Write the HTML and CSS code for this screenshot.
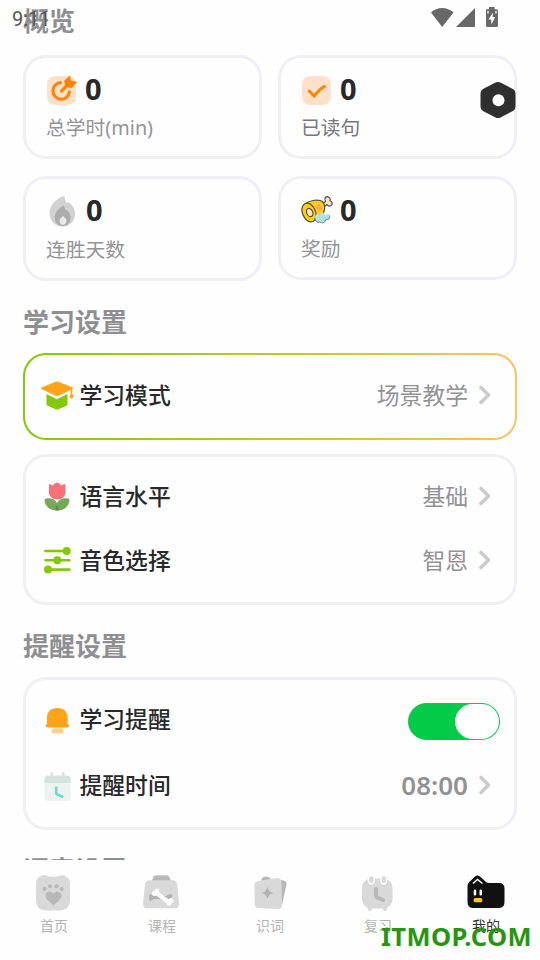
FILE: index.html
```html
<!DOCTYPE html>
<html lang="zh-CN">
<head>
<meta charset="utf-8">
<title>我的</title>
<link rel="stylesheet" href="styles.css">
</head>
<body>
<div class="app">
  <main class="content">
    <h2 class="section-title first">概览</h2>
    <section class="stats">
      <div class="stat">
        <div class="stat-top">
          <svg class="stat-icon" width="32" height="32" viewBox="0 0 32 32"><rect x="1" y="2" width="29" height="29" rx="8" fill="#ffe0c8"/><path d="M14.500 8.600A8.300 8.300 0 1 0 23.400 18" fill="none" stroke="#ff8200" stroke-width="3" stroke-linecap="round"/><path d="M15.500 17l7-7" stroke="#ff8200" stroke-width="3.200" stroke-linecap="round"/><path d="M18 7l5.600-5.500 1.600 5 6 1.500-5.400 6-6-1z" fill="#ff8200"/></svg>
          <b class="num">0</b>
        </div>
        <div class="stat-label">总学时(min)</div>
      </div>
      <div class="stat">
        <div class="stat-top">
          <svg class="stat-icon" width="32" height="32" viewBox="0 0 32 32"><rect x="1" y="2" width="29" height="29" rx="8" fill="#ffe0c8"/><path d="M8.300 17l5 5.200C16 18.500 18.500 15 23.400 12.500" fill="none" stroke="#ff8200" stroke-width="3" stroke-linecap="round" stroke-linejoin="round"/></svg>
          <b class="num">0</b>
        </div>
        <div class="stat-label dark">已读句</div>
      </div>
      <div class="stat tall">
        <div class="stat-top">
          <svg class="stat-icon" width="32" height="32" viewBox="0 0 32 32"><path d="M18 1C11 3 3 10 3.500 18.500 4 27 10 31.500 16.500 31.500S29 27 29 19c0-6-3.500-10-7-12-1 1-1.500 1-2 .5C18.800 6 19.500 3 18 1z" fill="#d2d2d2"/><path d="M18 10.500c-3 1-9.500 6-9.300 12.500.2 4.500 3.300 8 8 8s8-3.500 8-8-2.700-7-5-8.200c-.8-.6-1-2.300-1.700-4.300z" fill="#acacac"/><path d="M17 21c-2 1.500-3.500 3-3.500 5 0 2.300 1.500 3.700 3.500 3.700s3.500-1.500 3.500-3.700c0-2-1.500-3.500-3.500-5z" fill="#e8e8e8"/></svg>
          <b class="num shifted">0</b>
        </div>
        <div class="stat-label">连胜天数</div>
      </div>
      <div class="stat reward">
        <div class="stat-top">
          <svg class="stat-icon" width="32" height="32" viewBox="0 0 32 32"><g stroke="#4a4a4a" stroke-width="1.200" stroke-linejoin="round"><path d="M21 9l3.500-2.500c-2-3 .5-6 3.300-4.300 2 1 1.500 3 1 3.500 3.200 1 3 4.300.7 5.300-2 .5-3-.5-3.500-1.500L23 12z" fill="#fbe3cb"/><path d="M5 8.500C9 5 18 4 21.500 6.500c3 3 3 10-.5 13.500-3 3-6 5-9 6z" fill="#ffd000"/><ellipse cx="8" cy="17.500" rx="6.500" ry="9.800" transform="rotate(-23 8 17.500)" fill="#ffd000"/><ellipse cx="8.700" cy="17.500" rx="3" ry="4.300" transform="rotate(-22 8.700 17.500)" fill="#fbe3cb"/></g><path d="M15 11l3-2 2 2 1 2-2 3-2-1-2-1z" fill="#ff9c88"/><circle cx="18" cy="12.500" r="1" fill="#ffd000"/><path d="M14 21.500c1-3 3-3 4.500-2 1-3 5-2.500 5.500.5 2-1.500 5.500-.5 5 2 0 2.500-2.500 3.500-4.500 2.500 0 2.500-3 3.500-5 2-3 1.500-6-1-5.500-5z" fill="#b4dfe4"/><path d="M24.500 25c-.5 3-3.500 3.500-5.500 2-3 1-5-1-5-4M28.500 20.500c1 3-1.500 4.500-4 4" stroke="#5d7d81" fill="none"/></svg>
          <b class="num">0</b>
        </div>
        <div class="stat-label">奖励</div>
      </div>
    </section>

    <h2 class="section-title study">学习设置</h2>
    <section class="panel mode">
      <div class="row">
        <svg class="row-icon" width="34" height="34" viewBox="0 0 34 34"><path d="M6.500 15L17 20.300 27.500 15v10q0 1-1 1.700L19 30q-2 1-4 0l-7.500-3.300q-1-.7-1-1.700z" fill="#83c904"/><path d="M15 3q2-.8 4 0l13.500 5.500q1.500.8 0 1.600L19 16.500q-2 .8-4 0L1.500 10q-1.500-.8 0-1.500z" fill="#ffa319"/><path d="M31.500 10v8" stroke="#ffa319" stroke-width="1.600"/><circle cx="31.500" cy="17.500" r="1.900" fill="#ffa319"/></svg>
        <span class="name">学习模式</span><span class="value">场景教学</span>
        <svg class="chevron" width="12" height="20" viewBox="0 0 12 20"><path d="M2 2.500L9.500 10 2 17.500" /></svg>
      </div>
    </section>
    <section class="panel voice">
      <div class="row">
        <svg class="row-icon" width="34" height="34" viewBox="0 0 34 34"><path d="M9 5.500c2-.5 3 .5 3.600 1.500C13.500 5 15 4 17 3.500 19 4 20.500 5 21.400 7c.6-1 2-2 4-1.500V13c0 4-3.500 7.500-8.300 7.500S8.800 17 8.800 13z" fill="#fa7078"/><path d="M11 19.500c5 1 8 6 7.500 11.800C10 32.500 4.500 27 4.500 20.500 6 19 8 19 11 19.500z" fill="#76a85a"/><path d="M23 19.500c-5 1-8 6-7.500 11.800C24 32.500 29.500 27 29.500 20.500 28 19 26 19 23 19.500z" fill="#76a85a"/><path d="M17 26q2 2.500 1.500 5.200h-3Q15 28.500 17 26z" fill="#59943c"/></svg>
        <span class="name">语言水平</span><span class="value">基础</span>
        <svg class="chevron" width="12" height="20" viewBox="0 0 12 20"><path d="M2 2.500L9.500 10 2 17.500" /></svg>
      </div>
      <div class="row">
        <svg class="row-icon" width="34" height="34" viewBox="0 0 34 34"><path d="M5.400 8h23M5.400 17.300h24M5.400 26.600h24" stroke="#83c904" stroke-width="2.600" stroke-linecap="round"/><g fill="#83c904"><circle cx="26.700" cy="8" r="4"/><circle cx="17.300" cy="17.300" r="4"/><circle cx="8" cy="26.600" r="4"/></g></svg>
        <span class="name">音色选择</span><span class="value">智恩</span>
        <svg class="chevron" width="12" height="20" viewBox="0 0 12 20"><path d="M2 2.500L9.500 10 2 17.500" /></svg>
      </div>
    </section>

    <h2 class="section-title remind-title">提醒设置</h2>
    <section class="panel remind">
      <div class="row">
        <svg class="row-icon" width="34" height="34" viewBox="0 0 34 34"><path d="M7 16C7 9.500 11 6 17.300 6S27.700 9.500 27.700 16v5.500l1.300 2q.4 2-1.500 2h-20q-2 0-1.800-2L7 21.500z" fill="#ffa319"/><rect x="11.500" y="26.500" width="12" height="5" rx="2.500" fill="#ffcf8c"/></svg>
        <span class="name">学习提醒</span>
        <span class="switch"><span class="knob"></span></span>
      </div>
      <div class="row">
        <svg class="row-icon" width="34" height="34" viewBox="0 0 34 34"><path d="M4.300 14h26.400v15q0 4-4 4H8.300q-4 0-4-4z" fill="#edf2f0"/><path d="M4.300 15V11q0-3.500 4-3.500h18.400q4 0 4 3.500v4z" fill="#d6e4df"/><path d="M11.700 5.200v4M23.300 5.200v4" stroke="#d6e4df" stroke-width="2.600" stroke-linecap="round"/><path d="M16.200 18.500v6.500q0 1 1 1.500l6 2.500" fill="none" stroke="#68ddca" stroke-width="2.600"/></svg>
        <span class="name">提醒时间</span><span class="value time">08:00</span>
        <svg class="chevron" width="12" height="20" viewBox="0 0 12 20"><path d="M2 2.500L9.500 10 2 17.500" /></svg>
      </div>
    </section>
    <h2 class="section-title">语音设置</h2>
  </main>

  <nav class="tabs">
    <div class="tab">
      <svg width="40" height="38" viewBox="0 0 40 38"><path d="M10 1.200c3-.5 4 .8 6 1.300q4 .5 8 0c2-.5 4-1.800 7-1 4 1.500 6 4 6 8V26q0 10-10 10.500H13Q3 36.500 3 26V9.500C3 5 6 2 10 1.200z" fill="#d9d9d9"/><path d="M20.500 31.500l-6-5.500c-3-3-2.500-8 2-8.500q2.500 0 4 2 1.500-2 4-2c4.500.5 5 5.500 2 8.500z" fill="#b8b8b8"/><g fill="#b8b8b8"><circle cx="11.500" cy="15" r="2"/><circle cx="17" cy="12.200" r="2"/><circle cx="23.500" cy="12.200" r="2"/><circle cx="28.700" cy="15" r="2"/></g></svg>
      <span>首页</span>
    </div>
    <div class="tab">
      <svg width="40" height="38" viewBox="0 0 40 38"><path d="M11 7l1.300-4q.5-1.800 2.500-1.800h11q2 0 2.500 1.800L30 7z" fill="#b8b8b8"/><path d="M9 6.300h22.500q4 0 4.600 4l2 19q.3 5-4 5H6.500q-5 0-4.500-5l2-19q.7-4 5-4z" fill="#d9d9d9"/><path d="M10 20l3 2h12l4-2c2 0 3 1 2 3 1 2 0 4-2 4l-4-2H13l-3 2c-2 0-2-2-2-4s0-3 2-3z" fill="#b3b3b3"/><path d="M14.500 18.500l14 10" stroke="#fff" stroke-width="4"/><g fill="#fff"><circle cx="13.500" cy="19.500" r="2.500"/><circle cx="16" cy="16.800" r="2.200"/><circle cx="28" cy="29.500" r="2.200"/><circle cx="30" cy="26.500" r="2.500"/></g></svg>
      <span>课程</span>
    </div>
    <div class="tab cards">
      <svg width="40" height="38" viewBox="0 0 40 38"><path d="M11 6c2-5 8-4 10-1l13 1.500q3 1 2.500 4L32 31z" fill="#b8b8b8"/><path d="M8 7L27 4q4 0 4.500 4L32 31q0 4-4 4L9 34q-4 0-4.300-4L4.400 11q0-3 3.600-4z" fill="#d9d9d9"/><path d="M17.500 13q1 5 6 6-5 1-6 6-1-5-6-6 5-1 6-6z" fill="#b3b3b3"/></svg>
      <span>识词</span>
    </div>
    <div class="tab">
      <svg width="40" height="38" viewBox="0 0 40 38"><rect x="5" y="4.500" width="30.500" height="30" rx="9" fill="#d9d9d9"/><path d="M12.500 33.500l.5 1.500M28.500 33.500l-.5 1.500" stroke="#d9d9d9" stroke-width="4" stroke-linecap="round"/><g fill="#d9d9d9" stroke="#fff" stroke-width="1.300"><rect x="11.500" y="1.500" width="5.500" height="8.500" rx="2.700"/><rect x="24" y="1.500" width="5.500" height="8.500" rx="2.700"/></g><path d="M19 15v7q0 1 1 1.500l6 2.500" fill="none" stroke="#b8b8b8" stroke-width="4" stroke-linecap="round"/></svg>
      <span>复习</span>
    </div>
    <div class="tab active">
      <svg width="40" height="38" viewBox="0 0 40 38"><path d="M1.500 12q0-2.500 2-4.300L9 2.500q2.500-2 5 0L20 8q1.500 1 3 1h10q5.500 0 5.500 5.500V28q0 6-6 6H7.500q-6 0-6-6z" fill="#111"/><path d="M7 9.500l4.500-4 5 4" fill="none" stroke="#fff" stroke-width="1.500"/><rect x="7.700" y="15.500" width="2.500" height="6" rx="1.200" fill="#fff"/><rect x="13.500" y="15.500" width="2.500" height="6" rx="1.200" fill="#fff"/><rect x="7.700" y="24" width="8.500" height="4.300" rx="1.500" fill="#ffcb00"/></svg>
      <span>我的</span>
    </div>
  </nav>

  <div class="statusbar">
    <span class="clock">9:11</span>
    <svg width="70" height="24" viewBox="0 0 70 24"><g fill="#686868"><path d="M1 5.500C7-.5 17-.5 23.500 5.500L12.200 20z"/><path d="M45 1v19H26z"/><path d="M56 2.200h3V0h5.500v2.200h1.700q1.800 0 1.800 1.800v14.500q0 1.500-1.500 1.500H57.500Q56 20 56 18.500z"/></g><path d="M63 5.500l-4.500 7h2.800v5l4-7.500h-2.700z" fill="#fff"/><path d="M58 4v2.500M66 4v2.500" stroke="#fff" stroke-width="1.300"/></svg>
  </div>
  <svg class="float-button" width="36" height="38" viewBox="0 0 36 38"><path d="M15 1.800q3-1.700 6 0l11.500 6q3 1.700 3 5v12.500q0 3.300-3 5L21 36.200q-3 1.700-6 0L3.500 30.300q-3-1.700-3-5V12.800q0-3.300 3-5z" fill="#2f2f2f"/><circle cx="18.500" cy="19.300" r="6" fill="#fff"/></svg>
  <div class="watermark">ITMOP.COM</div>
</div>
</body>
</html>
```
FILE: styles.css
```css
* { box-sizing: border-box; }

body {
  margin: 0;
  background: #fefefe;
  font-family: "Noto Sans", "Noto Sans CJK SC", sans-serif;
  color: #29292b;
}

.app {
  position: relative;
  display: flex;
  flex-direction: column;
  width: 540px;
  height: 960px;
  overflow: hidden;
}

.content {
  height: 860px;
  padding: 3px 23px 0;
  overflow: hidden;
}

.section-title {
  height: 36px;
  margin: 0;
  font-size: 26px;
  font-weight: 600;
  line-height: 36px;
  color: #8f8f92;
}
.section-title.first { margin-bottom: 16px; }
.section-title.study { margin: 23px 0 13px; }
.section-title.remind-title { margin: 23px 0 13px; }

.stats {
  display: grid;
  grid-template-columns: 239px 239px;
  gap: 17px 16px;
  align-items: start;
}

.stat {
  height: 104px;
  padding: 15px 20px 0;
  border: 3px solid #efeff4;
  border-radius: 23px;
}
.stat.tall { height: 105px; }

.stat-top {
  display: flex;
  align-items: center;
  height: 34px;
}

.stat-icon { flex: none; }

.num {
  margin-left: 7px;
  font-size: 29px;
  line-height: 32px;
  height: 34px;
}
.num.shifted { margin-left: 8px; }

.stat-label {
  margin-top: 7px;
  font-size: 19.8px;
  font-weight: 400;
  line-height: 28px;
  color: #949497;
}
.stat-label.dark { color: #77777a; }
.tall .stat-label { margin-top: 8px; }

.panel {
  border: 3px solid #efeff4;
  border-radius: 23px;
}
.panel.mode {
  height: 87px;
  padding: 19px 24px 0 15px;
  border: 2px solid transparent;
  background: linear-gradient(#fefefe, #fefefe) padding-box,
              linear-gradient(90deg, #83c904, #ffc062) border-box;
}
.panel.voice {
  height: 151px;
  margin-top: 14px;
  padding: 17px 23px 0 14px;
}
.panel.remind {
  height: 153px;
  margin-bottom: 22px;
  padding: 17px 23px 0 14px;
}

.row {
  display: flex;
  align-items: center;
  height: 44px;
}
.voice .row + .row { margin-top: 20px; }
.remind .row + .row { margin-top: 22px; }

.row-icon { flex: none; }

.name {
  margin-left: 5.500px;
  padding-bottom: 2px;
  font-size: 22.8px;
  font-weight: 500;
}
.mode .name,
.mode .value { padding-bottom: 4px; }
.mode .chevron { margin-bottom: 2px; }

.value {
  margin-left: auto;
  padding-bottom: 2px;
  font-size: 22.8px;
  font-weight: 400;
  color: #929295;
}
.value.time {
  padding-bottom: 0;
  font-size: 26px;
  font-weight: 600;
}

.chevron {
  margin-left: 11px;
  fill: none;
  stroke: #cbcbcd;
  stroke-width: 3.600;
  stroke-linecap: round;
  stroke-linejoin: round;
}

.switch {
  display: flex;
  justify-content: flex-end;
  width: 92px;
  height: 37px;
  margin: 4px -9px 0 auto;
  padding: 1px;
  border-radius: 19px;
  background: #02cc47;
}
.knob {
  width: 44px;
  height: 35px;
  border-radius: 18px;
  background: #fff;
}

.tabs {
  display: grid;
  grid-template-columns: repeat(5, 108px);
  height: 100px;
  padding-top: 14px;
  background: #fefefe;
}
.tab {
  display: flex;
  flex-direction: column;
  align-items: center;
  font-size: 14px;
  font-weight: 400;
  line-height: 20px;
  color: #b4b4b4;
}
.tab svg { margin-right: 2px; }
.tab.cards svg { margin-right: 0; }
.tab.active svg { margin-right: 1px; }
.tab span { margin-top: 4px; }
.tab.active { color: #333; }

.statusbar {
  position: absolute;
  top: 0;
  left: 0;
  display: flex;
  justify-content: space-between;
  width: 540px;
  padding: 7px 40px 0 12px;
}
.clock {
  font-family: Roboto, sans-serif;
  font-size: 20px;
  line-height: 24px;
  color: #555;
}

.float-button {
  position: absolute;
  top: 81px;
  left: 479.500px;
}

.watermark {
  position: absolute;
  top: 918px;
  left: 381px;
  font-size: 25.5px;
  font-weight: 700;
  line-height: 36px;
  letter-spacing: 0.400px;
  color: #27950f;
}
```
